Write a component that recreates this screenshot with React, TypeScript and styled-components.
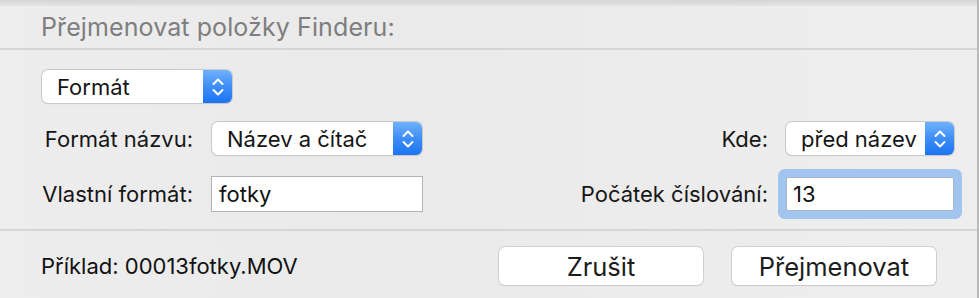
import React from 'react';
import styled, { createGlobalStyle } from 'styled-components';

const GlobalStyle = createGlobalStyle`
  html, body {
    margin: 0;
    padding: 0;
    background: #ececec;
  }
  body {
    font-family: Inter, "Liberation Sans", Arial, sans-serif;
    -webkit-font-smoothing: antialiased;
  }
`;

const Sheet = styled.div`
  width: 979px;
  height: 298px;
  box-sizing: border-box;
  background: linear-gradient(90deg, #ededed 0%, #eaeaeb 40%, #ececec 70%, #eeeeee 100%);
  border-right: 2px solid #b9b9b9;
  display: flex;
  flex-direction: column;
  overflow: hidden;
`;

const TopStrip = styled.div`
  height: 6px;
  background: linear-gradient(180deg, #d6d6d6 0%, #dfdfdf 70%, #e6e6e6 100%);
`;

const Header = styled.div`
  height: 42px;
  padding-left: 41px;
  display: flex;
  align-items: center;
  border-bottom: 2px solid #d5d5d5;
`;

const Title = styled.h1`
  margin: 0;
  font-size: 25px;
  font-weight: 400;
  color: #7e7e7e;
  letter-spacing: 0.1px;
`;

const Body = styled.div`
  padding: 20px 23px 17px 41px;
  border-bottom: 2px solid #d5d5d5;
`;

const FormGrid = styled.div`
  margin-top: 18px;
  display: grid;
  grid-template-columns: 152px 212px 1fr 168px;
  grid-template-rows: 35px 36px;
  column-gap: 18px;
  row-gap: 20px;
  align-items: center;
`;

const Label = styled.label`
  justify-self: end;
  font-size: 22px;
  color: #161616;
  white-space: nowrap;
`;

const Popup = styled.div<{ $width: number }>`
  width: ${(p) => p.$width}px;
  height: 33px;
  box-sizing: border-box;
  display: flex;
  align-items: stretch;
  background: #ffffff;
  border-radius: 6px;
  box-shadow: 0 0 0 1px #c9c9c9, 0 1px 1px rgba(0, 0, 0, 0.18);
  overflow: hidden;
`;

const PopupText = styled.span`
  flex: 1;
  padding-left: 15px;
  display: flex;
  align-items: center;
  font-size: 22px;
  color: #161616;
  white-space: nowrap;
`;

const PopupArrows = styled.span`
  width: 29px;
  display: flex;
  align-items: center;
  justify-content: center;
  background: linear-gradient(180deg, #6fb2fb 0%, #3e8ef8 50%, #1c74f4 100%);
`;

const TextField = styled.div<{ $focused?: boolean }>`
  width: 100%;
  height: ${(p) => (p.$focused ? 34 : 36)}px;
  box-sizing: border-box;
  display: flex;
  align-items: center;
  padding-left: ${(p) => (p.$focused ? 6 : 7)}px;
  background: #ffffff;
  border: 1px solid ${(p) => (p.$focused ? '#a9b7c9' : '#b4b4b4')};
  border-radius: ${(p) => (p.$focused ? 2 : 0)}px;
  box-shadow: ${(p) => (p.$focused ? '0 0 0 8px #a2c5f0' : 'none')};
  font-size: 22px;
  color: #111111;
`;

const Cell = styled.div<{ $shift?: number }>`
  display: flex;
  padding-left: ${(p) => p.$shift ?? 0}px;
`;

const Footer = styled.div`
  flex: 1;
  display: flex;
  align-items: flex-start;
  padding: 16px 41px 0 41px;
`;

const Example = styled.div`
  height: 38px;
  display: flex;
  align-items: center;
  font-size: 22px;
  color: #111111;
`;

const Buttons = styled.div`
  margin-left: auto;
  display: flex;
  gap: 29px;
`;

const Button = styled.button`
  width: 204px;
  height: 38px;
  background: #ffffff;
  border: none;
  border-radius: 6px;
  box-shadow: 0 0 0 1px #cfcfcf, 0 1px 1px rgba(0, 0, 0, 0.2);
  font-family: inherit;
  font-size: 25.5px;
  color: #1c1c1c;
  padding: 0;
`;

const Arrows = () => (
  <svg width="14" height="22" viewBox="0 0 14 22" fill="none">
    <path d="M2.5 8 L7 3.5 L11.5 8" stroke="#fff" strokeWidth="2" strokeLinecap="round" strokeLinejoin="round" />
    <path d="M2.5 14 L7 18.5 L11.5 14" stroke="#fff" strokeWidth="2" strokeLinecap="round" strokeLinejoin="round" />
  </svg>
);

const PopupButton: React.FC<{ value: string; width: number }> = ({ value, width }) => (
  <Popup $width={width}>
    <PopupText>{value}</PopupText>
    <PopupArrows>
      <Arrows />
    </PopupArrows>
  </Popup>
);

const App: React.FC = () => (
  <>
    <GlobalStyle />
    <Sheet>
      <TopStrip />
      <Header>
        <Title>Přejmenovat položky Finderu:</Title>
      </Header>
      <Body>
        <Cell $shift={1}>
          <PopupButton value="Formát" width={190} />
        </Cell>
        <FormGrid>
          <Label>Formát názvu:</Label>
          <Cell $shift={1}>
            <PopupButton value="Název a čítač" width={210} />
          </Cell>
          <Label>Kde:</Label>
          <PopupButton value="před název" width={168} />

          <Label>Vlastní formát:</Label>
          <TextField>fotky</TextField>
          <Label>Počátek číslování:</Label>
          <TextField $focused>13</TextField>
        </FormGrid>
      </Body>
      <Footer>
        <Example>Příklad: 00013fotky.MOV</Example>
        <Buttons>
          <Button>Zrušit</Button>
          <Button>Přejmenovat</Button>
        </Buttons>
      </Footer>
    </Sheet>
  </>
);

export default App;
